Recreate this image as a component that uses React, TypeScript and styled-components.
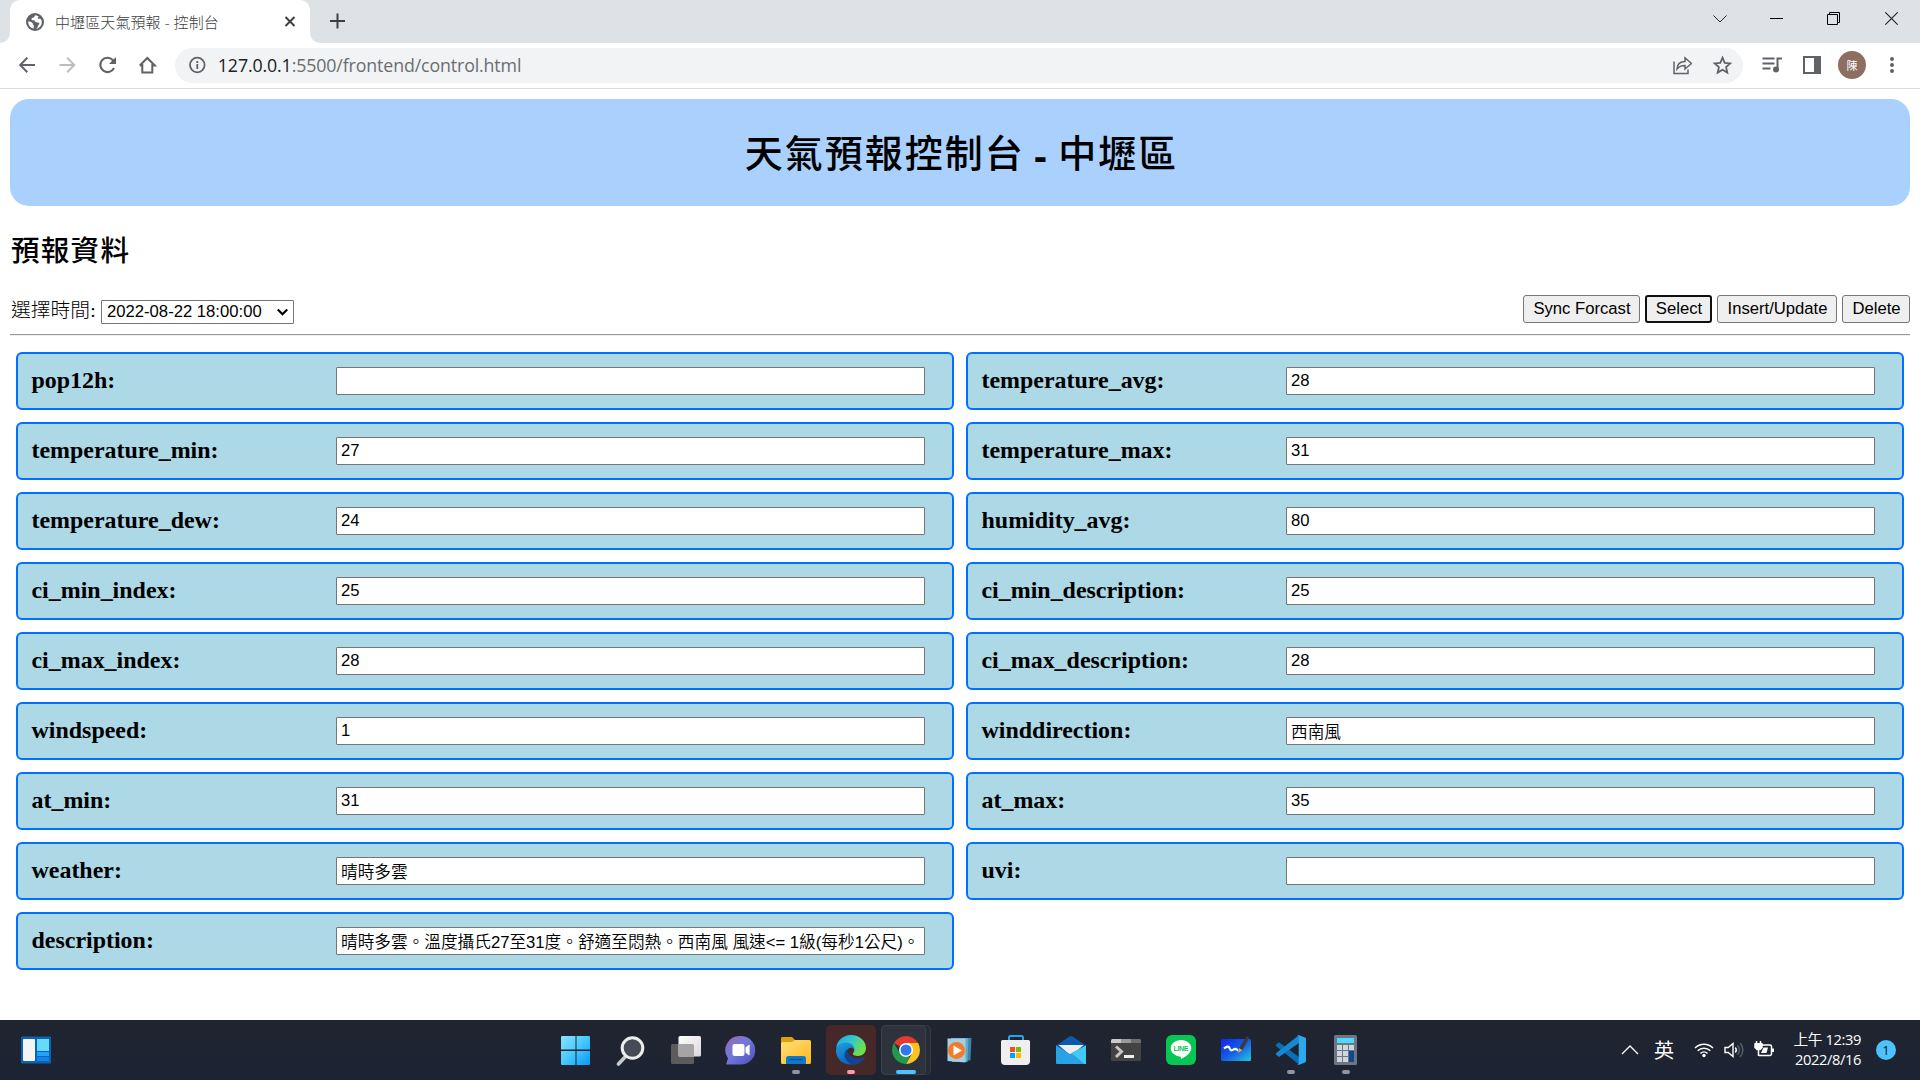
import React from 'react';
import styled, { createGlobalStyle } from 'styled-components';

const serif = `"Liberation Serif", "Noto Sans CJK TC", serif`;
const arial = `"Liberation Sans", "Noto Sans CJK TC", sans-serif`;
const ui = `"Open Sans", "Noto Sans CJK TC", sans-serif`;

const GlobalStyle = createGlobalStyle`
  * { box-sizing: border-box; }
  body { margin: 0; background: #fff; }
`;

const Screen = styled.div`
  width: 1920px;
  height: 1080px;
  display: flex;
  flex-direction: column;
  overflow: hidden;
  background: #fff;
`;

/* ---------- browser chrome ---------- */
const TabStrip = styled.div`
  height: 43px;
  display: flex;
  align-items: stretch;
  background: #dee1e6;
`;
const TabFoot = styled.div<{ $side: 'left' | 'right' }>`
  width: 10px;
  background: #fff;
  &::before {
    content: '';
    display: block;
    height: 43px;
    background: #dee1e6;
    border-radius: ${p => (p.$side === 'left' ? '0 0 10px 0' : '0 0 0 10px')};
  }
`;
const TabShell = styled.div`
  width: 300px;
  background: #fff;
  border-radius: 10px 10px 0 0;
  display: flex;
  align-items: center;
  padding: 0 13px 0 16px;
`;
const TabBack = styled.div`
  background: #dee1e6;
  display: flex;
`;
const TabTitle = styled.span`
  flex: 1;
  margin-left: 11px;
  font: 300 15px/20px ${ui};
  letter-spacing: 0.1px;
  color: #3c4043;
  white-space: nowrap;
`;
const NewTab = styled.div`
  width: 35px;
  padding-bottom: 1px;
  display: grid;
  place-items: center;
`;
const WindowControls = styled.div`
  margin-left: auto;
  display: flex;
  height: 37px;
`;
const WindowControl = styled.div`
  width: 57px;
  display: grid;
  place-items: center;
`;
const Toolbar = styled.div`
  height: 46px;
  display: flex;
  align-items: center;
  padding: 0 8px 1px 7px;
  border-bottom: 1px solid #dadce0;
`;
const ToolSlot = styled.div`
  width: 40px;
  height: 40px;
  display: grid;
  place-items: center;
`;
const AddressBar = styled.div`
  width: 1570px;
  height: 35px;
  margin: 0 9px 0 8px;
  padding: 0 1px 0 13px;
  display: flex;
  align-items: center;
  border-radius: 18px;
  background: #f1f3f4;
`;
const Url = styled.span`
  flex: 1;
  margin-left: 12px;
  font: 400 17.8px/24px ${ui};
  letter-spacing: -0.13px;
  color: #6a6e72;
  b { font-weight: 400; color: #202124; }
`;
const Avatar = styled.div`
  width: 28px;
  height: 28px;
  border-radius: 50%;
  background: #8d6e63;
  color: #fff;
  font: 11px/28px "Noto Sans CJK TC", sans-serif;
  text-align: center;
`;

/* ---------- page ---------- */
const Page = styled.main`
  flex: 1;
  padding: 10px;
`;
const Banner = styled.header`
  height: 107px;
  padding: 3px 0 0 3px;
  border-radius: 19px;
  background: #aad1fe;
  display: grid;
  place-items: center;
`;
const Title = styled.h1`
  margin: 0;
  font: 500 38px/54px ${serif};
  letter-spacing: 2px;
  b {
    display: inline-block;
    margin: 2px 11px 0 9px;
    font: 700 40px/40px ${arial};
    letter-spacing: 0;
    vertical-align: -3px;
  }
`;
const SectionTitle = styled.h2`
  margin: 26px 0 0 1px;
  font: 500 28.6px/40px ${serif};
  letter-spacing: 1.2px;
`;
const Controls = styled.div`
  height: 28px;
  margin-top: 23px;
  display: flex;
  align-items: center;
  gap: 5px;
`;
const TimeLabel = styled.label`
  width: 86px;
  margin-left: 1px;
  padding-top: 1px;
  font: 300 19.8px/28px ${serif};
  white-space: nowrap;
`;
const SelectWrap = styled.div`
  display: grid;
  align-items: center;
  justify-items: end;
  margin: 5px auto 0 -1px;
  svg { grid-area: 1 / 1; margin-right: 5px; pointer-events: none; }
`;
const TimeSelect = styled.select`
  grid-area: 1 / 1;
  appearance: none;
  width: 193px;
  height: 24px;
  padding: 0 5px;
  border: 1px solid #767676;
  border-radius: 1px;
  background: #fff;
  color: #000;
  font: 16.67px/20px ${arial};
`;
const ActionButton = styled.button<{ $w: number; $focused?: boolean }>`
  width: ${p => p.$w}px;
  height: 28px;
  padding: 0 0 1px 1px;
  border: ${p => (p.$focused ? '2px solid #101010' : '1px solid #767676')};
  border-radius: 3px;
  background: #efefef;
  color: #000;
  font: 16.67px/20px ${arial};
  white-space: nowrap;
`;
const Rule = styled.hr`
  height: 2px;
  margin: 11px 0 0;
  border: 0;
  border-top: 1px solid #9a9a9a;
  border-bottom: 1px solid #eee;
`;
const Fields = styled.div`
  margin: 16px 6px 0;
  display: grid;
  grid-template-columns: 938px 938px;
  column-gap: 12px;
  row-gap: 12px;
`;
const FieldCard = styled.div`
  height: 58px;
  padding: 0 27px 0 13.5px;
  display: flex;
  align-items: center;
  justify-content: space-between;
  border: 2px solid #0070ff;
  border-radius: 6px;
  background: #add8e6;
`;
const FieldLabel = styled.label`
  font: 700 23.95px/30px ${serif};
  padding-bottom: 2px;
`;
const FieldInput = styled.input`
  width: 589px;
  height: 28px;
  margin: 0;
  padding: 0 4px 1px;
  border: 1px solid #767676;
  border-radius: 1px;
  background: #fff;
  color: #000;
  font: 350 16.67px/24px ${arial};
`;

/* ---------- taskbar ---------- */
const Taskbar = styled.footer`
  height: 60px;
  display: flex;
  align-items: center;
  background: linear-gradient(#20252f, #1c2333);
`;
const Widgets = styled.div`
  width: 548px;
  padding-left: 20px;
  display: flex;
`;
const AppSlot = styled.div`
  width: 55px;
  height: 60px;
  display: flex;
  align-items: center;
  justify-content: center;
`;
const AppTile = styled.div<{ $kind?: 'alert' | 'active' }>`
  position: relative;
  width: 50px;
  height: 50px;
  display: grid;
  place-items: center;
  border-radius: 5px;
  background: ${p => (p.$kind === 'alert' ? '#472829' : 'transparent')};
  svg { position: relative; }
  ${p => p.$kind === 'active' && `
    background: #262b36;
    box-shadow: inset 0 0 0 1px #343943;
    &::before {
      content: '';
      position: absolute;
      inset: 0 5px 0 0;
      border: 1px solid #3b404a;
      border-radius: 5px;
      background: #2d323d;
    }
  `}
`;
const Indicator = styled.i<{ $color: string; $w: number }>`
  position: absolute;
  bottom: 1px;
  left: calc(50% - ${p => p.$w / 2}px);
  width: ${p => p.$w}px;
  height: 4px;
  border-radius: 2px;
  background: ${p => p.$color};
`;
const Tray = styled.div`
  margin-left: auto;
  padding-right: 24px;
  display: flex;
  align-items: center;
  color: #fff;
`;
const Ime = styled.span`
  margin: 0 20px 0 15px;
  font: 20px/28px "Noto Sans CJK TC", sans-serif;
`;
const TrayIcons = styled.div`
  display: flex;
  gap: 10px;
`;
const Clock = styled.div`
  width: 87px;
  margin-top: -2px;
  text-align: right;
  font: 400 14.7px/20px ${ui};
  letter-spacing: -0.4px;
  white-space: nowrap;
`;
const Badge = styled.span`
  width: 20px;
  height: 20px;
  margin-left: 15px;
  border-radius: 50%;
  background: #4cc2ff;
  color: #101820;
  font: 13px/20px ${ui};
  text-align: center;
`;

type SvgProps = { w?: number; h?: number; children: React.ReactNode; stroke?: string; sw?: number };
const Icon = ({ w = 20, h = 20, children, stroke = 'none', sw = 2 }: SvgProps) => (
  <svg width={w} height={h} viewBox={`0 0 ${w} ${h}`} fill="none" stroke={stroke} strokeWidth={sw}>
    {children}
  </svg>
);
const App32 = ({ children }: { children: React.ReactNode }) => (
  <svg width="32" height="32" viewBox="0 0 32 32" fill="none">{children}</svg>
);

const grey = '#5f6368';

const GlobeIcon = () => (
  <Icon w={18} h={18}>
    <circle cx="9" cy="9" r="9" fill={grey} />
    <path d="M9.2 2.2c-1 .9-.4 1.9-1.6 2.4-1.3.4-2.3.5-2.1 1.8.2 1 1.500.7 2.300.8 1.300.2 1 1.500 2.100 2 1.200.5 3.100-.1 3.500 1.300.3 1.200-1.500 1.500-1.600 2.600 0 1-.6 2-1.700 2.600 3.300-.5 5.700-3.300 5.700-6.700 0-3.300-2.900-6.500-6.600-6.800z" fill="#fff" />
    <path d="M2.200 8.200c1.500.3 3 .6 4.300 1.700.6.600 0 1.500.9 2 .8.500.5 1.300.3 2.100v1.600c-3.200-.6-5.700-3.500-5.500-7.400z" fill="#fff" />
    <path d="M12.800 3.600c-1 .4-1.500 1.300-.7 2 .8.600 2 .3 3.200.9-.3-1.200-1.300-2.200-2.500-2.900z" fill={grey} />
  </Icon>
);

const WindowsIcon = () => (
  <App32>
    <defs><linearGradient id="win" x1="0" y1="0" x2="1" y2="1"><stop stopColor="#8be3ff" /><stop offset=".5" stopColor="#45c8ff" /><stop offset="1" stopColor="#0a98f8" /></linearGradient></defs>
    <path d="M2 2h13.500v13.500H1V3a1 1 0 0 1 1-1zM16.500 2H29a1 1 0 0 1 1 1v12.500H16.500zM1 17h14.500v14H2a1 1 0 0 1-1-1zM16.500 17H30v13a1 1 0 0 1-1 1H16.500z" fill="url(#win)" />
  </App32>
);
const SearchIcon = () => (
  <App32>
    <path d="M11.500 21.500 3.500 30" stroke="#c9cacc" strokeWidth="3.600" strokeLinecap="round" />
    <circle cx="17.500" cy="14" r="10.300" fill="#474b55" stroke="#eceded" strokeWidth="3" />
  </App32>
);
const TaskViewIcon = () => (
  <App32>
    <defs><linearGradient id="tv" x1="0" y1="0" x2="1" y2="1"><stop stopColor="#fff" /><stop offset="1" stopColor="#d9d9d9" /></linearGradient></defs>
    <rect x="1" y="10" width="23" height="20" rx="1.500" fill="#5c5c5d" />
    <rect x="8.500" y="2" width="22.500" height="20.500" rx="1.500" fill="url(#tv)" />
    <path d="M8.500 10H22.500a1.500 1.500 0 0 1 1.500 1.500v11H10a1.500 1.500 0 0 1-1.500-1.500z" fill="#a5a5a5" />
  </App32>
);
const ChatIcon = () => (
  <App32>
    <defs><linearGradient id="chat" x1="0" y1="0" x2="1" y2="1"><stop stopColor="#9a68b8" /><stop offset=".45" stopColor="#7378d8" /><stop offset="1" stopColor="#4b4fc0" /></linearGradient></defs>
    <path d="M16 2a14 14 0 1 1 0 28.500H2c-1 0-1-.8-.5-1.500L3 24.500A14.300 14.300 0 0 1 16 2z" fill="url(#chat)" />
    <rect x="7.500" y="10" width="12" height="12" rx="2" fill="#fff" />
    <path d="m20.500 13.500 3.300-2.700c.4-.3.800 0 .8.500v9.400c0 .5-.4.800-.8.500L20.500 18.500z" fill="#fff" />
  </App32>
);
const FolderIcon = () => (
  <App32>
    <defs><linearGradient id="fold" x1="0" y1="0" x2="1" y2="1"><stop stopColor="#ffe07a" /><stop offset="1" stopColor="#ffb81c" /></linearGradient></defs>
    <path d="M2.500 3H12l3 3v6H1V4.500C1 3.500 1.500 3 2.500 3z" fill="#e0a008" />
    <path d="M1 9.500a2 2 0 0 1 2-1.500h9l3-2h14.500A1.500 1.500 0 0 1 31 7.500v21a1.500 1.500 0 0 1-1.500 1.500h-27A1.500 1.500 0 0 1 1 28.500z" fill="url(#fold)" />
    <path d="M6 30v-5.500a2.500 2.500 0 0 1 2.500-2.500h15a2.500 2.500 0 0 1 2.500 2.500V30z" fill="#0f78c8" />
    <path d="M9.500 25.500h13" stroke="#0a4f94" strokeWidth="1.200" />
  </App32>
);
const EdgeIcon = () => (
  <App32>
    <defs>
      <linearGradient id="eg1" x1="0" y1="0" x2="1" y2=".5"><stop stopColor="#1fa3e0" /><stop offset=".5" stopColor="#35c5d0" /><stop offset="1" stopColor="#6fe04a" /></linearGradient>
      <linearGradient id="eg2" x1="0" y1="0" x2=".4" y2="1"><stop stopColor="#1ba0e0" /><stop offset="1" stopColor="#0b66bd" /></linearGradient>
    </defs>
    <path d="M1.200 14C2 6.500 8 1 16 1c8.500 0 15 6 15 13 0 5-3.700 8-8 8-3.500 0-5.500-1.200-5.300-2.200.2-.9 1.600-1.300 1.600-3.800 0-3-3-6.200-8-6.200-4.600 0-8.500 2-10.100 4.200z" fill="url(#eg1)" />
    <path d="M1 16.500c0-5.200 5-8 10-8 5.300 0 8.300 3.300 8.300 7-.8-1.200-2-1.700-3.300-1.700-3 0-4.500 2.700-4.500 5.200 0 5.500 4.500 10.500 9.500 10.800C10.500 33 1 26.500 1 16.500z" fill="url(#eg2)" />
    <path d="M12 15.500c-2.500 2-3.400 6-1.200 9.700 2.300 4 7 6.300 11.200 5 3.300-1.200 6.300-3.500 7.800-6.300.3-.7-.3-1.100-.9-.8-6.400 3.200-14.900.9-16.900-7.600z" fill="#12448f" />
  </App32>
);
const ChromeIcon = () => (
  <App32>
    <path d="M16 16 3.900 9A14 14 0 0 1 28.100 9z" fill="#e33b2e" />
    <path d="M16 9h12.100A14 14 0 0 1 16 30l6-10.500z" fill="#fcc31e" />
    <path d="M3.900 9 10 19.500l6 3.500h4L16 30A14 14 0 0 1 3.900 9z" fill="#229a4c" />
    <circle cx="16" cy="16" r="7" fill="#fff" />
    <circle cx="16" cy="16" r="5.500" fill="#3079ea" />
  </App32>
);
const PlayerIcon = () => (
  <App32>
    <path d="M9 4h17.500l-1 22.500H11z" fill="#3f82a8" /><path d="M6 4h17.500l-1 24H7z" fill="#65a9ca" />
    <path d="M2.500 4.500h18v24L2.500 27z" fill="#a3cfe2" />
    <circle cx="11.500" cy="16.500" r="8.500" fill="#f47a28" />
    <path d="M8.500 11.500v10l8.500-5z" fill="#fff" />
  </App32>
);
const StoreIcon = () => (
  <App32>
    <path d="M9 7V3.500a1.500 1.500 0 0 1 1.500-1.500h11a1.500 1.500 0 0 1 1.500 1.500V7" stroke="#22a7ea" strokeWidth="2" />
    <path d="M2.500 6h26a1.500 1.500 0 0 1 1.500 1.500V27a4 4 0 0 1-4 4H5a4 4 0 0 1-4-4V7.500A1.500 1.500 0 0 1 2.500 6z" fill="#efefef" />
    <path d="M10 13h5v5h-5z" fill="#f25022" /><path d="M16 13h5v5h-5z" fill="#7fba00" />
    <path d="M10 19h5v5h-5z" fill="#00a4ef" /><path d="M16 19h5v5h-5z" fill="#ffb900" />
  </App32>
);
const MailIcon = () => (
  <App32>
    <path d="M1 11.500 14.500 2.500a2.500 2.500 0 0 1 3 0L31 11.500v4H1z" fill="#0a5baa" />
    <path d="M3.500 11h25L16 22z" fill="#eeeef0" />
    <path d="M1 11.500 15 20l2-1L31 11.500V29a1 1 0 0 1-1 1H2a1 1 0 0 1-1-1z" fill="#28a3e6" />
    <path d="M31 11.500 16.500 19 29.500 30H31z" fill="#42c8f2" />
  </App32>
);
const TerminalIcon = () => (
  <App32>
    <rect x="1" y="5" width="30" height="22" rx="1.500" fill="#434343" />
    <path d="M1 9V6.500A1.500 1.500 0 0 1 2.500 5H11v4z" fill="#c9c9c9" /><path d="M11 5h10v4H11z" fill="#9a9a9a" /><path d="M21 5h8.500A1.500 1.500 0 0 1 31 6.500V9H21z" fill="#6f6f6f" />
    <path d="m6 12.500 5.500 5L6 23" stroke="#c8c8c8" strokeWidth="3" />
    <path d="M14 22.500h10" stroke="#eee" strokeWidth="3" />
  </App32>
);
const LineText = styled.text`
  font: 700 7px "Liberation Sans", sans-serif;
  fill: #06c755;
`;
const LineIcon = () => (
  <App32>
    <rect x="1" y="1" width="30" height="30" rx="6" fill="#06c755" />
    <path d="M16 6c5.800 0 10.300 3.700 10.300 8.300 0 5-6.800 9.200-10.300 10.700-.3-.9.300-2-.5-2.300C10 22 5.700 18.700 5.700 14.300 5.700 9.700 10.200 6 16 6z" fill="#fff" />
    <LineText x="8.500" y="17" textLength="15">LINE</LineText>
  </App32>
);
const WhiteboardIcon = () => (
  <App32>
    <defs><linearGradient id="wb" x1="0" y1="0" x2="1" y2="1"><stop stopColor="#1226f0" /><stop offset=".5" stopColor="#155ce8" /><stop offset="1" stopColor="#27c6da" /></linearGradient></defs>
    <rect x="1" y="5" width="30" height="22" rx="1.500" fill="url(#wb)" />
    <path d="M4 14.500c3.500-3 5-2 5.500-.5s1.500 3.500 4 1.500 3 .5 5 1" stroke="#fff" strokeWidth="2.200" />
    <path d="m19 14 7-11c1-1.500 3.800-.2 3 1.500L22.500 16l-4.500 3z" fill="#3a3a3c" /><path d="m19 14 3.500 2.200L18 19z" fill="#c5a89a" />
  </App32>
);
const CodeIcon = () => (
  <App32>
    <path d="m1.300 10.300 2-1.500c.5-.4 1-.4 1.500 0L24 23v7.500L1.300 12.200c-.6-.5-.6-1.300 0-1.900z" fill="#0a6fb8" />
    <path d="m1.300 20.800 2 1.700c.5.400 1 .4 1.500 0L24 9V1L1.300 18.900c-.6.500-.6 1.400 0 1.900z" fill="#1787cf" />
    <path d="M23.500 1 30 3.500c.6.300 1 .8 1 1.500v22c0 .7-.4 1.200-1 1.500L23.500 31c-.8.200-1.300 0-1.800-.5 1 .5 2 0 2-1.300V2.800c0-1.300-1-1.800-2-1.300.5-.5 1-.7 1.800-.5z" fill="#2fa7ee" />
  </App32>
);
const CalcIcon = () => (
  <App32>
    <rect x="4" y="1" width="23" height="30" rx="1.500" fill="#6d7682" />
    <rect x="7" y="4" width="17" height="5" fill="#4fd8ff" />
    <path d="M7 11h5v5H7zm6 0h5v5h-5zm6 0h5v5h-5zM7 17h5v5H7zm6 0h5v5h-5zm-6 6h5v5H7zm6 0h5v5h-5z" fill="#cfd5dc" />
    <path d="M19 17h5v11h-5z" fill="#10488c" />
  </App32>
);

type Task = { icon: React.ReactNode; kind?: 'alert' | 'active'; mark?: [string, number] };
const tasks: Task[] = [
  { icon: <WindowsIcon /> },
  { icon: <SearchIcon /> },
  { icon: <TaskViewIcon /> },
  { icon: <ChatIcon /> },
  { icon: <FolderIcon />, mark: ['#9095a0', 8] },
  { icon: <EdgeIcon />, kind: 'alert', mark: ['#ff99a4', 8] },
  { icon: <ChromeIcon />, kind: 'active', mark: ['#4cc2ff', 20] },
  { icon: <PlayerIcon /> },
  { icon: <StoreIcon /> },
  { icon: <MailIcon /> },
  { icon: <TerminalIcon /> },
  { icon: <LineIcon /> },
  { icon: <WhiteboardIcon /> },
  { icon: <CodeIcon />, mark: ['#9095a0', 8] },
  { icon: <CalcIcon />, mark: ['#9095a0', 8] },
];

const fields: [string, string][] = [
  ['pop12h', ''], ['temperature_avg', '28'],
  ['temperature_min', '27'], ['temperature_max', '31'],
  ['temperature_dew', '24'], ['humidity_avg', '80'],
  ['ci_min_index', '25'], ['ci_min_description', '25'],
  ['ci_max_index', '28'], ['ci_max_description', '28'],
  ['windspeed', '1'], ['winddirection', '西南風'],
  ['at_min', '31'], ['at_max', '35'],
  ['weather', '晴時多雲'], ['uvi', ''],
  ['description', '晴時多雲。溫度攝氏27至31度。舒適至悶熱。西南風 風速<= 1級(每秒1公尺)。'],
];

export default function App() {
  return (
    <Screen lang="zh-Hant">
      <GlobalStyle />
      <TabStrip>
        <TabFoot $side="left" />
        <TabBack>
          <TabShell>
            <GlobeIcon />
            <TabTitle>中壢區天氣預報 - 控制台</TabTitle>
            <Icon w={14} h={14} stroke="#3c4043" sw={2}><path d="m2.500 2 9 9m0-9-9 9" /></Icon>
          </TabShell>
        </TabBack>
        <TabFoot $side="right" />
        <NewTab><Icon w={16} h={16} stroke="#3c4043" sw={2}><path d="M7.500 .5v15M0 8h15" /></Icon></NewTab>
        <WindowControls>
          <WindowControl><Icon w={15} h={14} stroke="#222" sw={1}><path d="m.5 3.500 6.500 6.500L13.500 3.500" /></Icon></WindowControl>
          <WindowControl><Icon w={15} h={13} stroke="#000" sw={1}><path d="M0 6.500h13" /></Icon></WindowControl>
          <WindowControl><Icon w={15} h={13} stroke="#000" sw={1}><path d="M.5 2.500h10v10H.5zM2.500 2.500v-2h10v10h-2" /></Icon></WindowControl>
          <WindowControl><Icon w={13} h={13} stroke="#222" sw={1.1}><path d="m.3.3 12.400 12.400m0-12.400L.3 12.700" /></Icon></WindowControl>
        </WindowControls>
      </TabStrip>
      <Toolbar>
        <ToolSlot><Icon stroke={grey}><path d="M18 10H3.500M10.300 2.800 3.200 10l7.100 7.200" /></Icon></ToolSlot>
        <ToolSlot><Icon stroke="#bcbec1"><path d="M2.500 10H17M10.200 2.800l7.100 7.200-7.100 7.200" /></Icon></ToolSlot>
        <ToolSlot>
          <Icon stroke={grey} sw={2.1}><path d="M17 13a7.200 7.200 0 1 1-1.300-8.100L17.500 6.700" /><path d="M19 2v7h-7z" fill={grey} stroke="none" /></Icon>
        </ToolSlot>
        <ToolSlot><Icon stroke={grey}><path d="M5.300 9v8.500h10V9M2.800 10.500 10.300 3l7.500 7.500h-3M2.800 10.500h3" /></Icon></ToolSlot>
        <AddressBar>
          <Icon w={18} h={18} stroke={grey} sw={1.800}><circle cx="9.300" cy="9" r="7.300" /><path d="M9.300 8v5M9.300 5v1.900" /></Icon>
          <Url><b>127.0.0.1</b>:5500/frontend/control.html</Url>
          <ToolSlot>
            <Icon stroke={grey} sw={1.500}><path d="M2 6.500V18.500h14v-4M5 14c.3-5 3.500-7.500 8-7.500v-3.700l6.500 5.700-6.500 5.500v-3.500c-3.500 0-6 1-8 3.500z" /></Icon>
          </ToolSlot>
          <ToolSlot>
            <Icon stroke={grey} sw={1.800}><path d="m10.500 2.700 2.200 5.200 5.600.5-4.200 3.700 1.200 5.500-4.800-2.900-4.800 2.900 1.200-5.500-4.200-3.700 5.600-.5z" /></Icon>
          </ToolSlot>
        </AddressBar>
        <ToolSlot>
          <Icon stroke={grey}><path d="M.5 3.500h12M.5 8.500h12M.5 13.500h8M15.500 14V3.500H20" /><circle cx="14" cy="14.500" r="3" fill={grey} stroke="none" /></Icon>
        </ToolSlot>
        <ToolSlot>
          <Icon w={18} h={18} stroke={grey}><path d="M1 1h16v16H1z" /><path d="M11 1h6v16h-6z" fill={grey} stroke="none" /></Icon>
        </ToolSlot>
        <ToolSlot><Avatar>陳</Avatar></ToolSlot>
        <ToolSlot><Icon><g fill={grey}><circle cx="10" cy="4" r="2" /><circle cx="10" cy="10" r="2" /><circle cx="10" cy="16" r="2" /></g></Icon></ToolSlot>
      </Toolbar>

      <Page>
        <Banner><Title>天氣預報控制台<b>-</b>中壢區</Title></Banner>
        <SectionTitle>預報資料</SectionTitle>
        <Controls>
          <TimeLabel>選擇時間:</TimeLabel>
          <SelectWrap>
            <TimeSelect defaultValue="a"><option value="a">2022-08-22 18:00:00</option></TimeSelect>
            <Icon w={13} h={10} stroke="#000" sw={2.200}><path d="m1.800 2.500 4.700 4.700 4.700-4.700" /></Icon>
          </SelectWrap>
          <ActionButton $w={117}>Sync Forcast</ActionButton>
          <ActionButton $w={67} $focused>Select</ActionButton>
          <ActionButton $w={120}>Insert/Update</ActionButton>
          <ActionButton $w={68}>Delete</ActionButton>
        </Controls>
        <Rule />
        <Fields>
          {fields.map(([name, value]) => (
            <FieldCard key={name}>
              <FieldLabel htmlFor={name}>{name}:</FieldLabel>
              <FieldInput id={name} defaultValue={value} />
            </FieldCard>
          ))}
        </Fields>
      </Page>

      <Taskbar>
        <Widgets>
          <Icon w={32} h={32}>
            <rect x="1" y="2.500" width="30" height="27" rx="1" fill="#0c62b4" />
            <rect x="3" y="5" width="12" height="22" rx="1" fill="#f4f4f4" />
            <path d="M17 5h12v12H17z" fill="#66d9ff" /><path d="M17 18h12v4H17z" fill="#1ea5fa" /><path d="M17 23h12v4H17z" fill="#0a86ee" />
          </Icon>
        </Widgets>
        {tasks.map((t, i) => (
          <AppSlot key={i}>
            <AppTile $kind={t.kind}>
              {t.icon}
              {t.mark && <Indicator $color={t.mark[0]} $w={t.mark[1]} />}
            </AppTile>
          </AppSlot>
        ))}
        <Tray>
          <Icon w={18} h={12} stroke="#fff" sw={1.300}><path d="m1 10 8-8 8 8" /></Icon>
          <Ime>英</Ime>
          <TrayIcons>
            <Icon stroke="#fff" sw={1.500}>
              <path d="M1 8a12.500 12.500 0 0 1 18 0M3.700 10.800a8.800 8.800 0 0 1 12.600 0M6.500 13.500a5 5 0 0 1 7 0" /><circle cx="10" cy="15.500" r="1.700" fill="#fff" stroke="none" />
            </Icon>
            <Icon stroke="#fff" sw={1.400}>
              <path d="M1 7.500h3.200L9 3.500v13l-4.800-4H1z" /><path d="M11.300 7.500a4 4 0 0 1 0 5" /><path d="M13.500 5.200a7 7 0 0 1 0 9.600M16 3a10 10 0 0 1 0 14" stroke="#5a6070" />
            </Icon>
            <Icon stroke="#fff" sw={1.500}>
              <path d="M1 4h7M2.500 1v3M6.500 1v3" /><path d="M1 4h7v3.500L6 9.500H3L1 7.500z" fill="#fff" /><path d="M4.500 9v7M7.500 5h8.500a1.500 1.500 0 0 1 1.500 1.500v7.500a1.500 1.500 0 0 1-1.500 1.500H5" /><path d="M9.500 7.500h4.500L12.500 13H7z" fill="#fff" stroke="none" /><path d="M19 8.500v3.500" strokeWidth="2" />
            </Icon>
          </TrayIcons>
          <Clock>上午 12:39<br />2022/8/16</Clock>
          <Badge>1</Badge>
        </Tray>
      </Taskbar>
    </Screen>
  );
}
